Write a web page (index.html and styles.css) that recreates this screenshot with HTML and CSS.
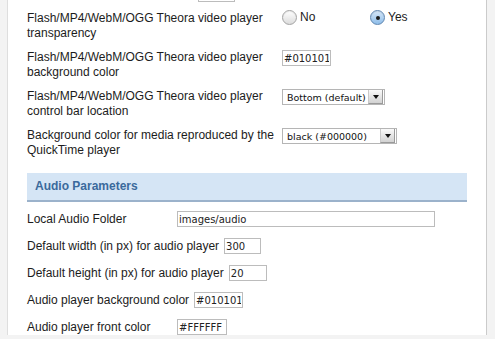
FILE: index.html
```html
<!DOCTYPE html>
<html lang="en">
<head>
  <meta charset="UTF-8">
  <title>Media settings</title>
  <link rel="stylesheet" href="styles.css">
</head>
<body>
  <div class="page">
    <!-- tail of the row above, scrolled off -->
    <div class="inline-row prev-row">
      <span class="inline-label spacer"></span>
      <input class="text-input w37" type="text" value="">
    </div>

    <div class="field">
      <div class="field-label">Flash/MP4/WebM/OGG Theora video player<br>transparency</div>
      <div class="field-value">
        <label class="radio-option"><span class="radio"></span>No</label>
        <label class="radio-option"><span class="radio checked"></span>Yes</label>
      </div>
    </div>

    <div class="field">
      <div class="field-label">Flash/MP4/WebM/OGG Theora video player<br>background color</div>
      <div class="field-value">
        <input class="text-input w49" type="text" value="#010101">
      </div>
    </div>

    <div class="field">
      <div class="field-label">Flash/MP4/WebM/OGG Theora video player<br>control bar location</div>
      <div class="field-value">
        <div class="select w103"><span class="select-text">Bottom (default)</span><span class="select-arrow"></span></div>
      </div>
    </div>

    <div class="field">
      <div class="field-label">Background color for media reproduced by the<br>QuickTime player</div>
      <div class="field-value">
        <div class="select w115"><span class="select-text">black (#000000)</span><span class="select-arrow"></span></div>
      </div>
    </div>

    <h3 class="section-head">Audio Parameters</h3>

    <div class="inline-row">
      <span class="inline-label">Local Audio Folder</span>
      <input class="text-input w258" type="text" value="images/audio">
    </div>
    <div class="inline-row">
      <span class="inline-label">Default width (in px) for audio player</span>
      <input class="text-input w37" type="text" value="300">
    </div>
    <div class="inline-row">
      <span class="inline-label">Default height (in px) for audio player</span>
      <input class="text-input w38" type="text" value="20">
    </div>
    <div class="inline-row">
      <span class="inline-label">Audio player background color</span>
      <input class="text-input w49" type="text" value="#010101">
    </div>
    <div class="inline-row">
      <span class="inline-label">Audio player front color</span>
      <input class="text-input w50" type="text" value="#FFFFFF">
    </div>
  </div>
</body>
</html>
```

FILE: styles.css
```css
* {
  box-sizing: border-box;
}

body {
  margin: 0;
  height: 339px;
  overflow: hidden;
  background: #f3f3f3;
  font-family: "Liberation Sans", Arial, sans-serif;
  font-size: 12px;
  line-height: 15px;
  color: #1c1c1c;
}

.page {
  margin-left: 7px;
  width: 480px;
  min-height: 100vh;
  padding: 0 19px;
  background: #fff;
  border-left: 1px solid #dedede;
  border-right: 1px solid #cbcbcb;
}

/* first block: label column + value column */
.field {
  display: flex;
  padding-bottom: 9px;
}
.field-label {
  width: 255px;
  flex: none;
}
.field-value {
  display: flex;
  align-items: flex-start;
}

.radio-option {
  display: flex;
  align-items: center;
  width: 88px;
  gap: 3px;
  margin-top: -1px;
  line-height: 15px;
}
.radio {
  display: flex;
  align-items: center;
  justify-content: center;
  width: 15px;
  height: 15px;
  border-radius: 50%;
  border: 1px solid #a3a3a3;
  background: linear-gradient(#ffffff, #dcdcdc);
  box-shadow: inset 0 1px 1px rgba(0, 0, 0, 0.08);
}
.radio.checked {
  border-color: #5f86b0;
  background: linear-gradient(#d7e8f9, #8ebde9);
}
.radio.checked::after {
  content: "";
  width: 4px;
  height: 4px;
  border-radius: 50%;
  background: #1b1b1b;
}

.text-input {
  height: 16px;
  padding: 0 1px;
  border: 1px solid #bcbcbc;
  font-family: "DejaVu Sans", sans-serif;
  font-size: 10px;
  color: #222;
  background: #fff;
  outline: none;
}
.w37 { width: 37px; }
.w38 { width: 38px; }
.w49 { width: 49px; }
.w50 { width: 50px; }
.w258 { width: 258px; }
.w103 { width: 103px; }
.w115 { width: 115px; }

.select {
  display: flex;
  align-items: center;
  height: 16px;
  border: 1px solid #b5b5b5;
  background: #fff;
  font-family: "DejaVu Sans", sans-serif;
  font-size: 9.5px;
  color: #111;
}
.select-text {
  flex: 1;
  padding-left: 4px;
  white-space: nowrap;
}
.select-arrow {
  display: flex;
  align-items: center;
  justify-content: center;
  width: 15px;
  height: 14px;
  margin-right: 1px;
  border-left: 1px solid #c9c9c9;
  border-right: 1px solid #9a9a9a;
  border-bottom: 1px solid #9a9a9a;
  background: linear-gradient(#fafafa, #d2d2d2);
}
.select-arrow::after {
  content: "";
  border-left: 3.5px solid transparent;
  border-right: 3.5px solid transparent;
  border-top: 4px solid #111;
}

.section-head {
  margin: 6px 0 9px;
  height: 29px;
  padding-left: 8px;
  background: #d5e5f5;
  border-bottom: 2px solid #9bb2cb;
  font-size: 12px;
  line-height: 27px;
  font-weight: bold;
  color: #3b6a9c;
}

/* second block: label and input inline */
.inline-row {
  display: flex;
  align-items: center;
  height: 16px;
  margin-bottom: 11px;
}
.inline-label {
  min-width: 145px;
  margin-right: 5px;
  white-space: nowrap;
}
.prev-row {
  margin-top: -14px;
  margin-bottom: 9px;
}
.prev-row .spacer {
  min-width: 166px;
}
```
